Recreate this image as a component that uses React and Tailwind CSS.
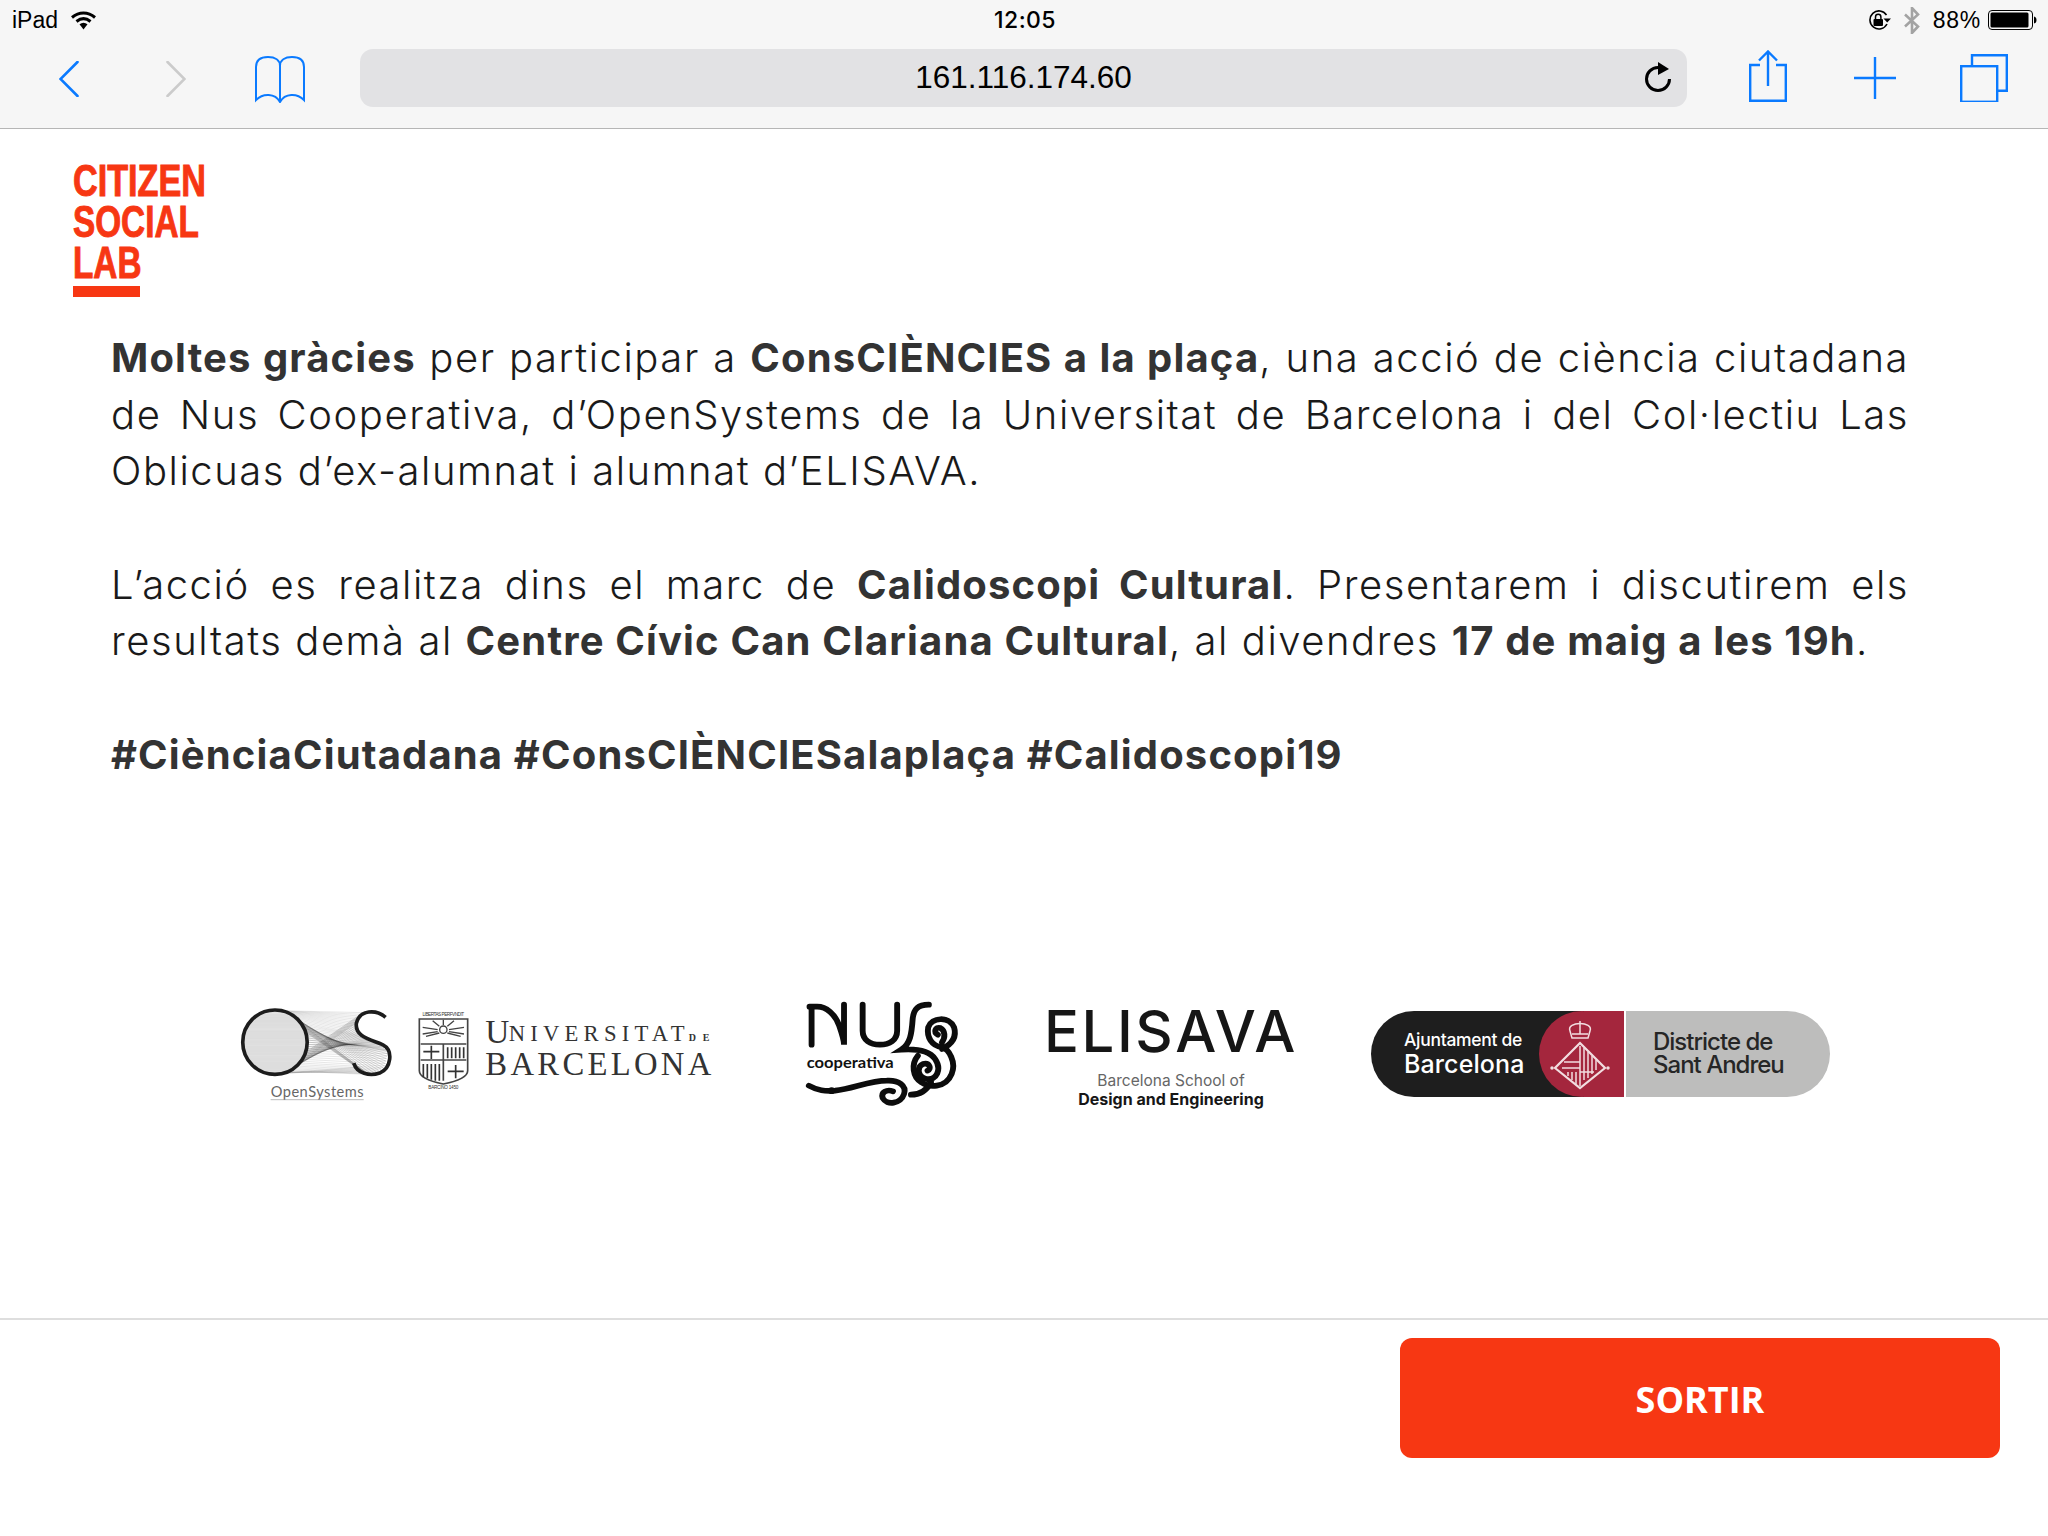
const BLUE = "#0a7aff";

function Line({ children, last }) {
  return (
    <div className={last ? "whitespace-nowrap" : "whitespace-nowrap [text-align-last:justify]"}>{children}</div>
  );
}

function B({ children }) {
  return <b className="font-bold tracking-[1.15px] text-[#333]">{children}</b>;
}

function StatusBar() {
  return (
    <div className="grid h-10 grid-cols-3 items-center text-[23px] text-black font-['Liberation_Sans',sans-serif]">
      <div className="flex items-center pl-3">
        <span>iPad</span>
        <svg className="ml-[13px]" width="25" height="19" viewBox="0 0 25 19">
          <path d="M1 6.5C8 0.5 17 0.5 24 6.5" fill="none" stroke="#000" strokeWidth="3" />
          <path d="M5.5 10.5C10 6.8 15 6.8 19.5 10.5" fill="none" stroke="#000" strokeWidth="3" />
          <path d="M8.5 13.2L12.5 18.5L16.5 13.2C14 11.2 11 11.2 8.5 13.2Z" fill="#000" />
        </svg>
      </div>
      <div className="text-center font-['Inter',sans-serif] font-medium tracking-[0.4px] pl-[2px]">12:05</div>
      <div className="flex items-center justify-end pr-[11px]">
        <svg width="24" height="20" viewBox="0 0 24 20" className="mr-3">
          <path d="M18.5 5A9 9 0 1 0 19 14" fill="none" stroke="#000" strokeWidth="1.6" />
          <path d="M15.5 8.5H23L19.2 12.5Z" fill="#000" />
          <rect x="5.5" y="9" width="9.5" height="7" rx="1" fill="#000" />
          <path d="M7.5 9V7a2.7 2.7 0 0 1 5.4 0v2" fill="none" stroke="#000" strokeWidth="1.5" />
        </svg>
        <svg width="16" height="27" viewBox="0 0 16 27" className="mr-[13px]">
          <path d="M1 7.5L14 19.5L8 26V1L14 7.5L1 19.5" fill="none" stroke="#a3a3a3" strokeWidth="2.6" />
        </svg>
        <span className="tracking-[0.7px]">88%</span>
        <svg width="49" height="20" viewBox="0 0 49 20" className="ml-[7px]">
          <rect x="0.5" y="0.5" width="44" height="19" rx="3.5" fill="none" stroke="#000" />
          <rect x="2.5" y="2.5" width="38" height="15" rx="1.5" fill="#000" />
          <path d="M46 6.5Q48.5 7 48.5 10T46 13.5Z" fill="#000" />
        </svg>
      </div>
    </div>
  );
}

function Toolbar() {
  return (
    <div className="flex h-[88px] items-start">
      <svg className="ml-[59px] mt-[21px]" width="20" height="36" viewBox="0 0 20 36">
        <path d="M18.5 1L1.5 18L18.5 35" fill="none" stroke={BLUE} strokeWidth="2.6" strokeLinecap="round" />
      </svg>
      <svg className="ml-[87px] mt-[21px]" width="20" height="36" viewBox="0 0 20 36">
        <path d="M1.5 1L18.5 18L1.5 35" fill="none" stroke="#cbcbcb" strokeWidth="2.6" strokeLinecap="round" />
      </svg>
      <svg className="ml-[69px] mt-[16px]" width="50" height="47" viewBox="0 0 50 47" fill="none" stroke={BLUE} strokeWidth="2">
        <path d="M25 10C25 4 20 1 13 1C6 1 1 4 1 11V44C8 37 20 37 25 46C30 37 42 37 49 44V11C49 4 44 1 37 1C30 1 25 4 25 10V46" />
      </svg>
      <div className="relative ml-[55px] mt-[9px] flex h-[58px] w-[1327px] items-center justify-center rounded-[13px] bg-[#e2e2e4] text-[31.5px] text-black font-['Liberation_Sans',sans-serif]">
        <span className="-mt-[1px]">161.116.174.60</span>
        <svg className="absolute right-[14px] top-[13px]" width="28" height="32" viewBox="0 0 28 32">
          <path d="M13 5.5A11.5 11.5 0 1 0 24.5 17" fill="none" stroke="#000" strokeWidth="3" />
          <path d="M13 0L24 7L13 13Z" fill="#000" />
        </svg>
      </div>
      <svg className="ml-[62px] mt-[10px]" width="38" height="52" viewBox="0 0 38 52" fill="none" stroke={BLUE} strokeWidth="2.4">
        <path d="M11 15H1.2V50.8H36.8V15H27" />
        <path d="M19 2V36M10 10.5L19 1.5L28 10.5" />
      </svg>
      <svg className="ml-[67px] mt-[17px]" width="42" height="42" viewBox="0 0 42 42" fill="none" stroke={BLUE} strokeWidth="2.4">
        <path d="M21 0V42M0 21H42" />
      </svg>
      <svg className="ml-[64px] mt-[14px]" width="48" height="48" viewBox="0 0 48 48" fill="none" stroke={BLUE} strokeWidth="2.4">
        <rect x="1.2" y="12.2" width="36" height="35.6" />
        <path d="M12 11.5V1.2H46.8V36.8H38" />
      </svg>
    </div>
  );
}

function Logo() {
  return (
    <div className="ml-[73px] w-[180px] text-[#f73713] font-['Liberation_Sans',sans-serif] text-[45px] leading-[41px] font-bold [-webkit-text-stroke:1px_#f73713]">
      <div className="origin-left scale-x-[0.76]">CITIZEN</div>
      <div className="origin-left scale-x-[0.74]">SOCIAL</div>
      <div className="origin-left scale-x-[0.74]">LAB</div>
      <div className="mt-[3px] h-[11px] w-[67px] bg-[#f73713]" />
    </div>
  );
}

const S_PTS = [[430, 98], [410, 130], [420, 165], [470, 185], [505, 215], [495, 262], [450, 285], [410, 262]];

function sPoint(t) {
  const f = t * (S_PTS.length - 1);
  const i = Math.min(Math.floor(f), S_PTS.length - 2);
  const r = f - i;
  return [S_PTS[i][0] + (S_PTS[i + 1][0] - S_PTS[i][0]) * r, S_PTS[i][1] + (S_PTS[i + 1][1] - S_PTS[i][1]) * r];
}

function OpenSystems() {
  const lines = [];
  const n = 44;
  for (let i = 0; i <= n; i++) {
    const t = i / n;
    const a = -Math.PI / 2 + t * Math.PI;
    const x1 = 165 + 95 * Math.cos(a);
    const y1 = 187 + 95 * Math.sin(a);
    const [x2, y2] = sPoint(t);
    const [x3, y3] = sPoint(1 - t);
    lines.push(<path key={"a" + i} d={`M${x1} ${y1}L${x2} ${y2}`} stroke="#333" strokeWidth="1" opacity="0.35" />);
    lines.push(<path key={"b" + i} d={`M${x1} ${y1}L${x3} ${y3}`} stroke="#222" strokeWidth="1" opacity="0.55" />);
  }
  const hatch = [];
  for (let i = 0; i < 60; i++) {
    const y = 92 + i * 3.2;
    const dx = Math.sqrt(Math.max(0, 93 * 93 - (y - 187) * (y - 187)));
    hatch.push(<path key={i} d={`M${165 - dx} ${y}L${165 + dx} ${y}`} stroke="#999" strokeWidth="1" opacity="0.6" />);
  }
  return (
    <svg width="153" height="103" viewBox="60 60 460 310" className="mb-[6px] shrink-0">
      {lines}
      <circle cx="165" cy="187" r="97" fill="#eeeeee" />
      {hatch}
      <circle cx="165" cy="187" r="97" fill="none" stroke="#1c1c1c" strokeWidth="11" />
      <path d="M498 112C470 88 420 88 410 130C405 170 450 178 490 195C522 212 515 265 480 280C450 290 412 282 402 250" fill="none" stroke="#1c1c1c" strokeWidth="11" />
      <text x="292" y="352" textAnchor="middle" fontSize="44" fill="#666" textLength="280" fontFamily="Lato, sans-serif">OpenSystems</text>
      <path d="M152 360H432" stroke="#999" strokeWidth="2" />
    </svg>
  );
}

function UB() {
  return (
    <svg width="298" height="84" viewBox="590 90 894 252" className="mb-[6px] ml-[23px] shrink-0" fontFamily="'Liberation Serif', serif" fill="#333">
      <text x="672" y="110" textAnchor="middle" fontSize="14" textLength="125" fontFamily="'Liberation Sans', sans-serif">LIBERTAS PERFVNDIT</text>
      <path d="M600 120H745V275Q745 300 672 315Q600 300 600 275Z" fill="#fff" stroke="#444" strokeWidth="5" />
      <path d="M604 195H741M672 195V305" stroke="#444" strokeWidth="5" fill="none" />
      <circle cx="672" cy="152" r="11" fill="none" stroke="#444" strokeWidth="4" />
      <path d="M610 145L655 152M610 165L655 158M734 145L689 152M734 165L689 158M640 125L660 142M704 125L684 142M672 122V138M620 172L660 162M724 172L684 162" stroke="#444" strokeWidth="4" fill="none" />
      <path d="M612 218H660M636 200V240M685 205V238M697 205V238M709 205V238M721 205V238M733 205V238M612 255V295M624 255V298M636 255V302M648 255V305M660 255V305M685 277H733M709 258V298" stroke="#333" strokeWidth="5" fill="none" />
      <path d="M604 243H741" stroke="#444" strokeWidth="4" />
      <text x="672" y="330" textAnchor="middle" fontSize="14" textLength="90" fontFamily="'Liberation Sans', sans-serif">BARCINO 1450</text>
      <text x="798" y="192" fontSize="100">U</text>
      <text x="868" y="186" fontSize="68" textLength="528" lengthAdjust="spacing">NIVERSITAT</text>
      <text x="1408" y="185" fontSize="30" fontWeight="700" textLength="62">DE</text>
      <text x="798" y="288" fontSize="98" textLength="678" lengthAdjust="spacing">BARCELONA</text>
    </svg>
  );
}

function Nus() {
  return (
    <svg width="158" height="110" viewBox="70 55 458 330" preserveAspectRatio="none" className="ml-[90px] shrink-0" fill="none" stroke="#0c0c0c" strokeWidth="17" strokeLinecap="round">
      <path d="M86 78H108C135 78 160 100 172 135C182 165 186 180 186 192V72M92 78V192" />
      <path d="M240 72V150C240 178 262 192 290 192C318 192 340 178 340 150V72" />
      <path d="M432 72C400 72 388 85 385 115C382 160 378 190 352 207C380 205 430 205 450 235C470 265 455 300 425 295C400 290 395 260 415 250C435 245 440 265 428 270" />
      <path d="M400 225C380 250 385 290 410 305C430 320 480 325 498 280C512 245 490 205 470 200C440 195 425 170 430 140C440 110 490 105 505 140C515 175 490 195 470 205M470 185C480 170 480 150 465 142C450 138 445 155 458 162" />
      <path d="M84 315C110 330 130 332 160 330C210 325 260 300 310 300C345 298 368 315 360 340C350 370 310 375 298 352C292 335 310 325 328 332M380 342C405 342 425 330 438 305" />
      <circle cx="150" cy="330" r="10" fill="#0c0c0c" stroke="none" />
      <text x="78" y="262" fontSize="46" fontWeight="700" stroke="none" fill="#111" textLength="252" lengthAdjust="spacingAndGlyphs" fontFamily="Lato, sans-serif">cooperativa</text>
    </svg>
  );
}

function Elisava() {
  return (
    <div className="ml-[84px] flex w-[250px] shrink-0 flex-col items-center font-['Inter',sans-serif] text-[#161616]">
      <div className="text-[58px] leading-[60px] font-medium tracking-[2.6px] whitespace-nowrap">ELISAVA</div>
      <div className="mt-[11px] text-[15.5px] leading-[18px] text-[#666] whitespace-nowrap">Barcelona School of</div>
      <div className="text-[16px] leading-[18px] font-bold whitespace-nowrap">Design and Engineering</div>
    </div>
  );
}

function Ajuntament() {
  return (
    <div className="ml-[75px] flex h-[86px] w-[459px] shrink-0 font-['Inter',sans-serif] tracking-[-0.3px]">
      <div className="relative h-full w-[253px] overflow-hidden rounded-l-[43px] bg-[#1e1e1e] text-white">
        <div className="absolute left-[168px] top-0 h-[86px] w-[86px] rounded-full bg-[#a4263d]" />
        <div className="absolute right-0 top-0 h-[86px] w-[40px] bg-[#a4263d]" />
        <div className="relative flex flex-col items-start pl-[33px] pt-[17px]">
          <div className="text-[17.5px] leading-[23px] font-medium whitespace-nowrap">Ajuntament de</div>
          <div className="text-[25px] leading-[26px] font-medium tracking-[0.1px] whitespace-nowrap">Barcelona</div>
        </div>
        <svg className="absolute left-[179px] top-[7px]" width="60" height="74" viewBox="0 0 60 74" fill="none" stroke="#f2dde0" strokeWidth="1.5">
          <path d="M20 13C16 3 44 3 40 13L38 20H22Z" />
          <path d="M22 16H38M30 3V16" />
          <path d="M30 25L55 50L30 70L5 50Z" strokeWidth="2.2" />
          <path d="M30 28V68M14 44H30M12 50H30M34 30V62M38 34V60M42 38V56M46 42V52M30 54H44M18 54V58M22 54V62M26 54V66" />
          <circle cx="2" cy="50" r="1" fill="#f2dde0" />
          <circle cx="58" cy="50" r="1" fill="#f2dde0" />
        </svg>
      </div>
      <div className="ml-[2px] flex-1 rounded-r-[43px] bg-[#bdbdbc] pl-[27px] pt-[19px] text-[24px] leading-[23px] font-medium tracking-[-1px] text-[#262626]">
        <div className="whitespace-nowrap">Districte de</div>
        <div className="whitespace-nowrap">Sant Andreu</div>
      </div>
    </div>
  );
}

export default function App() {
  return (
    <div className="flex h-[1536px] w-[2048px] flex-col overflow-hidden bg-white">
      <header className="h-[129px] shrink-0 border-b border-[#b6b6b6] bg-[#f6f6f6]">
        <StatusBar />
        <Toolbar />
      </header>

      <main className="flex-1 pt-[31px]">
        <Logo />
        <div className="ml-[111px] mt-[33px] w-[1798px] font-['Inter',sans-serif] text-[40px] font-light leading-[56.5px] tracking-[1.55px] text-[#1a1a1a]">
          <Line><B>Moltes gràcies</B> per participar a <B>ConsCIÈNCIES a la plaça</B>, una acció de ciència ciutadana</Line>
          <Line>de Nus Cooperativa, d’OpenSystems de la Universitat de Barcelona i del Col·lectiu Las</Line>
          <Line last>Oblicuas d’ex-alumnat i alumnat d’ELISAVA.</Line>
          <div className="h-[57px]" />
          <Line>L’acció es realitza dins el marc de <B>Calidoscopi Cultural</B>. Presentarem i discutirem els</Line>
          <Line last>resultats demà al <B>Centre Cívic Can Clariana Cultural</B>, al divendres <B>17 de maig a les 19h</B>.</Line>
          <div className="h-[57px]" />
          <Line last><B>#CiènciaCiutadana #ConsCIÈNCIESalaplaça #Calidoscopi19</B></Line>
        </div>
        <div className="ml-[240px] mt-[216px] flex items-center">
          <OpenSystems />
          <UB />
          <Nus />
          <Elisava />
          <Ajuntament />
        </div>
      </main>

      <footer className="h-[218px] shrink-0 border-t-2 border-[#dedede] pr-[48px] pt-[18px]">
        <button className="ml-auto flex h-[120px] w-[600px] items-center justify-center rounded-[12px] bg-[#f73713] pt-[4px] font-['Open_Sans',sans-serif] text-[36px] font-bold text-white">
          SORTIR
        </button>
      </footer>
    </div>
  );
}
